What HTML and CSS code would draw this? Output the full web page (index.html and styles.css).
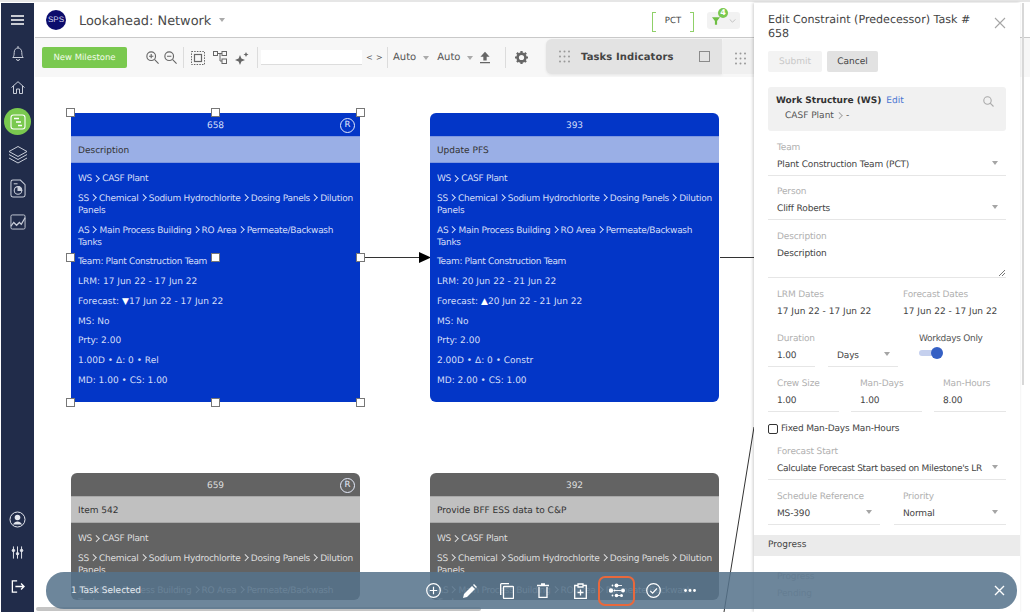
FILE: index.html
```html
<!DOCTYPE html>
<html lang="en">
<head>
    <meta charset="UTF-8">
    <meta name="viewport" content="width=device-width, initial-scale=1.0">
    <title>Lookahead: Network</title>
    <link rel="stylesheet" href="styles.css">
</head>
<body>
    <div class="app">
        <nav class="sidebar">
            <div class="side-group">
                <button class="side-btn burger"><svg width="13" height="10" viewBox="0 0 13 10"><path d="M0 1h13M0 5h13M0 9h13" stroke="#fff" stroke-width="1.500"/></svg></button>
                <button class="side-btn"><svg width="12" height="15" viewBox="0 0 12 15" fill="none" stroke="#c9ced9"><path d="M.8 11.500c1-1 1.400-2.500 1.400-5C2.200 3.800 3.800 2 6 2s3.800 1.800 3.800 4.500c0 2.500.4 4 1.400 5z"/><path d="M6 0v2M4.500 13a1.500 1.500 0 0 0 3 0"/></svg></button>
                <button class="side-btn"><svg width="14" height="13" viewBox="0 0 14 13" fill="none" stroke="#c9ced9"><path d="M.5 6.500L7 .7l6.500 5.800M2.500 5v7.500h3V8h3v4.500h3V5"/></svg></button>
                <button class="side-btn active"><svg width="16" height="16" viewBox="0 0 16 16" fill="none" stroke="#fff" stroke-width="1.100"><rect x="1" y="1" width="14" height="14" rx="2.500"/><path d="M4 4.500h5M6 8h5M8 11.500h4" stroke-width="1.400"/></svg></button>
                <button class="side-btn"><svg width="20" height="20" viewBox="0 0 20 20" fill="none" stroke="#c9ced9" stroke-width="1"><path d="M10 1.500l9 5-9 5-9-5z"/><path d="M1 9.500l9 5 9-5M1 13l9 5 9-5"/></svg></button>
                <button class="side-btn"><svg width="16" height="19" viewBox="0 0 17 20" fill="none" stroke="#c9ced9" stroke-width="1.100"><path d="M3 1h8l5 5v11a2 2 0 0 1-2 2H3a2 2 0 0 1-2-2V3a2 2 0 0 1 2-2z"/><path d="M4 5h4"/><circle cx="8.500" cy="12" r="4"/><path d="M8.500 12V8a4 4 0 0 1 4 4z" fill="#c9ced9"/></svg></button>
                <button class="side-btn"><svg width="16" height="16" viewBox="0 0 17 17" fill="none" stroke="#c9ced9" stroke-width="1"><rect x="1" y="1" width="15" height="15" rx="1.500"/><path d="M1 13l3-4 3 3 3-3 2 2 4-7" stroke-width="1.300"/></svg></button>
            </div>
            <div class="side-group">
                <button class="side-btn"><svg width="17" height="17" viewBox="0 0 17 17"><circle cx="8.500" cy="8.500" r="7.500" fill="none" stroke="#e4e7ee" stroke-width="1"/><circle cx="8.500" cy="6.500" r="2.800" fill="#e4e7ee"/><path d="M4 13.500c1-2 2.500-3 4.500-3s3.500 1 4.500 3z" fill="#e4e7ee"/></svg></button>
                <button class="side-btn"><svg width="13" height="13" viewBox="0 0 16 15" stroke="#e4e7ee" stroke-width="1.200" fill="#e4e7ee"><path d="M3 0v15M8 0v15M13 0v15"/><circle cx="3" cy="5" r="1.500"/><circle cx="8" cy="9" r="1.500"/><circle cx="13" cy="5" r="1.500"/></svg></button>
                <button class="side-btn"><svg width="14" height="13" viewBox="0 0 16 15" fill="none" stroke="#fff" stroke-width="1.500"><path d="M7 1H1.500v13H7M5 7.500h10M11.500 4l3.500 3.500-3.500 3.500"/></svg></button>
            </div>
        </nav>

        <div class="main">
            <header class="topbar">
                <div class="logo">SPS</div>
                <h1>Lookahead: Network</h1>
                <span class="caret title-caret"></span>
                <div class="team-tag">PCT</div>
                <div class="filter-btn">
                    <svg width="8" height="8" viewBox="0 0 11 10"><path d="M0 0h11L7 5v5H4V5z" fill="#6fbf44"/></svg>
                    <span class="badge">4</span>
                    <svg class="filter-chev" width="7" height="4" viewBox="0 0 8 5" fill="none" stroke="#b5b5b5"><path d="M.5.5L4 4 7.500.5"/></svg>
                </div>
            </header>

            <div class="toolbar">
                <button class="new-btn">New Milestone</button>
                <svg class="tool zoom-in" width="13" height="13" viewBox="0 0 15 15" fill="none" stroke="#666" stroke-width="1.300"><circle cx="6" cy="6" r="5"/><path d="M10 10l4.500 4.500M3.500 6h5M6 3.500v5"/></svg>
                <svg class="tool zoom-out" width="13" height="13" viewBox="0 0 15 15" fill="none" stroke="#666" stroke-width="1.300"><circle cx="6" cy="6" r="5"/><path d="M10 10l4.500 4.500M3.500 6h5"/></svg>
                <span class="sep"></span>
                <svg class="tool first" width="14" height="14" viewBox="0 0 14 14" fill="none" stroke="#666"><rect x=".5" y=".5" width="13" height="13" stroke-dasharray="1.500 1.200"/><rect x="3.500" y="3.500" width="7" height="7" stroke-width="1.200"/></svg>
                <svg class="tool" width="14" height="13" viewBox="0 0 14 13" fill="none" stroke="#666"><rect x=".5" y=".5" width="4" height="4"/><rect x="9" y=".5" width="4.500" height="4"/><rect x="9" y="8" width="4.500" height="4.500"/><path d="M4.500 2.500H9M7 2.500V10h2"/></svg>
                <svg class="tool" width="14" height="14" viewBox="0 0 14 14" fill="#666"><path d="M5 4l1.400 3.600L10 9l-3.600 1.400L5 14l-1.400-3.600L0 9l3.600-1.400zM11 1l.8 1.700 1.700.8-1.700.8L11 6l-.8-1.700-1.700-.8 1.700-.8z"/></svg>
                <span class="sep sep-search"></span>
                <input class="search" type="text">
                <span class="pager">&lt;</span>
                <span class="pager">&gt;</span>
                <span class="sep sep-auto"></span>
                <span class="auto">Auto</span><span class="caret"></span>
                <span class="auto">Auto</span><span class="caret"></span>
                <svg class="upload" width="10" height="13" viewBox="0 0 12 14" fill="#666"><path d="M6 0l5.500 6H8v4.500H4V6H.5zM0 12.500h12V14H0z"/></svg>
                <span class="sep sep-wide"></span>
                <svg class="gear" width="13" height="13" viewBox="0 0 14 14"><circle cx="7" cy="7" r="4.200" fill="none" stroke="#666" stroke-width="2.800"/><path d="M7 0v14M0 7h14M2 2l10 10M12 2L2 12" stroke="#666" stroke-width="2.400" stroke-dasharray="2.200 9.600 2.200"/></svg>
                <div class="indicators">
                    <svg width="11" height="13" viewBox="0 0 11 13" fill="#999"><circle cx="1" cy="1.500" r="1"/><circle cx="5.500" cy="1.500" r="1"/><circle cx="10" cy="1.500" r="1"/><circle cx="1" cy="6.500" r="1"/><circle cx="5.500" cy="6.500" r="1"/><circle cx="10" cy="6.500" r="1"/><circle cx="1" cy="11.500" r="1"/><circle cx="5.500" cy="11.500" r="1"/><circle cx="10" cy="11.500" r="1"/></svg>
                    <b>Tasks Indicators</b>
                    <span class="square"></span>
                </div>
                <div class="indicators-next">
                    <svg width="11" height="13" viewBox="0 0 11 13" fill="#999"><circle cx="1" cy="1.500" r="1"/><circle cx="5.500" cy="1.500" r="1"/><circle cx="10" cy="1.500" r="1"/><circle cx="1" cy="6.500" r="1"/><circle cx="5.500" cy="6.500" r="1"/><circle cx="10" cy="6.500" r="1"/><circle cx="1" cy="11.500" r="1"/><circle cx="5.500" cy="11.500" r="1"/><circle cx="10" cy="11.500" r="1"/></svg>
                </div>
            </div>

            <div class="canvas">
                <svg class="links" width="800" height="535" viewBox="0 0 800 535" fill="none" stroke="#333">
                    <path d="M325 180.500H384"/>
                    <path d="M384 175l12 5.500-12 5.500z" fill="#000" stroke="none"/>
                    <path d="M685 180.500H725"/>
                    <path d="M719 350L689 535"/>
                </svg>

                <div class="node node-658">
                    <div class="node-id">658<span class="r-mark">R</span></div>
                    <div class="node-title">Description</div>
                    <div class="node-body">
                        <p>WS <i></i> CASF Plant</p>
                        <p>SS <i></i> Chemical <i></i> Sodium Hydrochlorite <i></i> Dosing Panels <i></i> Dilution Panels</p>
                        <p>AS <i></i> Main Process Building <i></i> RO Area <i></i> Permeate/Backwash Tanks</p>
                        <p>Team: Plant Construction Team</p>
                        <p>LRM: 17 Jun 22 - 17 Jun 22</p>
                        <p>Forecast: <em>▼</em>17 Jun 22 - 17 Jun 22</p>
                        <p>MS: No</p>
                        <p>Prty: 2.00</p>
                        <p>1.00D • Δ: 0 • Rel</p>
                        <p>MD: 1.00 • CS: 1.00</p>
                    </div>
                    <span class="handle h-tl"></span><span class="handle h-tc"></span><span class="handle h-tr"></span>
                    <span class="handle h-ml"></span><span class="handle h-mc"></span><span class="handle h-mr"></span>
                    <span class="handle h-bl"></span><span class="handle h-bc"></span><span class="handle h-br"></span>
                </div>

                <div class="node node-393 round">
                    <div class="node-id">393</div>
                    <div class="node-title">Update PFS</div>
                    <div class="node-body">
                        <p>WS <i></i> CASF Plant</p>
                        <p>SS <i></i> Chemical <i></i> Sodium Hydrochlorite <i></i> Dosing Panels <i></i> Dilution Panels</p>
                        <p>AS <i></i> Main Process Building <i></i> RO Area <i></i> Permeate/Backwash Tanks</p>
                        <p>Team: Plant Construction Team</p>
                        <p>LRM: 20 Jun 22 - 21 Jun 22</p>
                        <p>Forecast: <em>▲</em>20 Jun 22 - 21 Jun 22</p>
                        <p>MS: No</p>
                        <p>Prty: 2.00</p>
                        <p>2.00D • Δ: 0 • Constr</p>
                        <p>MD: 2.00 • CS: 1.00</p>
                    </div>
                </div>

                <div class="node node-659 round grey">
                    <div class="node-id">659<span class="r-mark">R</span></div>
                    <div class="node-title">Item 542</div>
                    <div class="node-body">
                        <p>WS <i></i> CASF Plant</p>
                        <p>SS <i></i> Chemical <i></i> Sodium Hydrochlorite <i></i> Dosing Panels <i></i> Dilution Panels</p>
                        <p>AS <i></i> Main Process Building <i></i> RO Area <i></i> Permeate/Backwash Tanks</p>
                    </div>
                </div>

                <div class="node node-392 round grey">
                    <div class="node-id">392</div>
                    <div class="node-title">Provide BFF ESS data to C&amp;P</div>
                    <div class="node-body">
                        <p>WS <i></i> CASF Plant</p>
                        <p>SS <i></i> Chemical <i></i> Sodium Hydrochlorite <i></i> Dosing Panels <i></i> Dilution Panels</p>
                        <p>AS <i></i> Main Process Building <i></i> RO Area <i></i> Permeate/Backwash Tanks</p>
                    </div>
                </div>

                <div class="h-scroll"></div>
            </div>
        </div>

        <aside class="panel">
            <div class="panel-head">
                <h2>Edit Constraint (Predecessor) Task # 658</h2>
                <svg width="12" height="12" viewBox="0 0 12 12" stroke="#a5a5a5" stroke-width="1.100"><path d="M1 1l10 10M11 1L1 11"/></svg>
            </div>
            <div class="panel-btns">
                <button class="btn-submit">Submit</button>
                <button class="btn-cancel">Cancel</button>
            </div>
            <div class="ws-box">
                <div class="ws-title"><b>Work Structure (WS)</b><a>Edit</a>
                    <svg width="11" height="11" viewBox="0 0 11 11" fill="none" stroke="#aaa" stroke-width="1.100"><circle cx="4.500" cy="4.500" r="3.700"/><path d="M7.200 7.200L10.500 10.500"/></svg>
                </div>
                <div class="ws-path">CASF Plant <i></i> -</div>
            </div>

            <div class="field select"><label>Team</label><div class="value">Plant Construction Team (PCT)</div></div>
            <div class="field select"><label>Person</label><div class="value">Cliff Roberts</div></div>
            <div class="field desc"><label>Description</label><div class="value">Description<svg class="grip" width="6" height="6" viewBox="0 0 6 6" stroke="#777"><path d="M0 6l6-6M3 6l3-3"/></svg></div></div>

            <div class="row two dates">
                <div class="field plain"><label>LRM Dates</label><div class="value">17 Jun 22 - 17 Jun 22</div></div>
                <div class="field plain"><label>Forecast Dates</label><div class="value">17 Jun 22 - 17 Jun 22</div></div>
            </div>
            <div class="row duration">
                <div class="field"><label>Duration</label><div class="value">1.00</div></div>
                <div class="field select"><label>&nbsp;</label><div class="value">Days</div></div>
                <div class="workdays">
                    <span>Workdays Only</span>
                    <div class="toggle"><span class="knob"></span></div>
                </div>
            </div>
            <div class="row three">
                <div class="field"><label>Crew Size</label><div class="value">1.00</div></div>
                <div class="field"><label>Man-Days</label><div class="value">1.00</div></div>
                <div class="field"><label>Man-Hours</label><div class="value">8.00</div></div>
            </div>
            <div class="check-row"><span class="check"></span>Fixed Man-Days Man-Hours</div>
            <div class="field select"><label>Forecast Start</label><div class="value squeeze">Calculate Forecast Start based on Milestone's LR</div></div>
            <div class="row two">
                <div class="field select"><label>Schedule Reference</label><div class="value">MS-390</div></div>
                <div class="field select"><label>Priority</label><div class="value">Normal</div></div>
            </div>
            <div class="section-band">Progress</div>
            <div class="field plain faint"><label>Progress</label><div class="value">Pending</div></div>
        </aside>
        <div class="panel-scroll"></div>

        <div class="action-bar">
            <span class="selected-count">1 Task Selected</span>
            <div class="actions">
                <button class="act"><svg width="15" height="15" viewBox="0 0 15 15" fill="none" stroke="#fff" stroke-width="1.200"><circle cx="7.500" cy="7.500" r="6.800"/><path d="M3.800 7.500h7.400M7.500 3.800v7.400"/></svg></button>
                <button class="act"><svg width="14" height="14" viewBox="0 0 14 14" fill="#fff"><path d="M0 14l1-4 8-8 3 3-8 8zM10 1l1-1 3 3-1 1z"/></svg></button>
                <button class="act"><svg width="14" height="16" viewBox="0 0 14 16" fill="none" stroke="#fff" stroke-width="1.300"><rect x="3.500" y="3.500" width="10" height="12" rx=".8"/><path d="M.7 12V1.500a.8.8 0 0 1 .8-.8H9"/></svg></button>
                <button class="act"><svg width="12" height="15" viewBox="0 0 12 15" fill="none" stroke="#fff" stroke-width="1.300"><path d="M2 4v10.300h8V4"/><path d="M0 2.500h12M4 1h4" stroke-width="1.600"/></svg></button>
                <button class="act"><svg width="13" height="16" viewBox="0 0 13 16" fill="none" stroke="#fff" stroke-width="1.300"><path d="M4 2.500H.7v12.800h11.600V2.500H9"/><path d="M4 1h5v3H4zM3.500 9.500h6M6.500 6.500v6"/></svg></button>
                <button class="act act-on"><svg width="16" height="15" viewBox="0 0 16 15" fill="#fff"><path d="M9 2.500h4M6 7.500h6M9 12.500h2" fill="none" stroke="#fff" stroke-width=".9"/><circle cx="3.500" cy="2.500" r=".9"/><circle cx="7.500" cy="2.500" r="2"/><circle cx="2" cy="7.500" r="2.200"/><circle cx="5.500" cy="7.500" r="1"/><circle cx="14" cy="7.500" r="2"/><circle cx="3.500" cy="12.500" r=".9"/><circle cx="7.500" cy="12.500" r="1.800"/><circle cx="12.500" cy="12.500" r="1.500"/></svg></button>
                <button class="act"><svg width="15" height="15" viewBox="0 0 15 15" fill="none" stroke="#fff" stroke-width="1.200"><circle cx="7.500" cy="7.500" r="6.800"/><path d="M4.300 7.800l2.300 2.300 4.300-4.600"/></svg></button>
                <button class="act"><svg width="12" height="3" viewBox="0 0 12 3" fill="#fff"><circle cx="1.500" cy="1.500" r="1.400"/><circle cx="6" cy="1.500" r="1.400"/><circle cx="10.500" cy="1.500" r="1.400"/></svg></button>
            </div>
            <svg class="bar-close" width="11" height="11" viewBox="0 0 11 11" stroke="#fff" stroke-width="1.400"><path d="M1 1l9 9M10 1l-9 9"/></svg>
        </div>
    </div>
</body>
</html>
```

FILE: styles.css
```css
*{
    margin: 0;
    padding: 0;
    box-sizing: border-box;
}
html,body{
    height: 100%;
    overflow: hidden;
}
body{
    background-color: #fff;
    font-family: "DejaVu Sans", Verdana, sans-serif;
    color: #444;
    text-rendering: geometricPrecision;
}
button{
    font-family: inherit;
    border: none;
    background: none;
    text-rendering: inherit;
}
.app{
    position: relative;
    display: flex;
    width: 1030px;
    height: 612px;
    padding: 3px 0 0 1px;
    background: linear-gradient(#e6e6e6 2px, #fff 2px);
}

/* left nav */
.sidebar{
    width: 33px;
    margin-right: 1px;
    flex: none;
    background-color: #212c4a;
    display: flex;
    flex-direction: column;
    justify-content: space-between;
    align-items: center;
    padding-bottom: 9px;
}
.side-group{
    display: flex;
    flex-direction: column;
    align-items: center;
}
.side-btn{
    width: 28px;
    height: 33.500px;
    display: flex;
    justify-content: center;
    align-items: center;
}
.burger{
    height: 34px;
}
.active{
    height: 27px;
    width: 27px;
    margin: 4px 0 3px;
    border-radius: 50%;
    background-color: #7ac94f;
}

/* top */
.main{
    flex: 1;
    min-width: 0;
    display: flex;
    flex-direction: column;
}
.topbar{
    height: 35px;
    flex: none;
    display: flex;
    align-items: center;
    padding-left: 11px;
    border-bottom: 1px solid #c9c9c9;
    position: relative;
}
.logo{
    width: 20px;
    height: 20px;
    border-radius: 50%;
    background-color: #0c0c6c;
    color: #d8d9f0;
    font-family: "Liberation Sans", sans-serif;
    font-size: 8px;
    line-height: 20px;
    text-align: center;
}
h1{
    font-size: 12.900px;
    font-weight: 400;
    color: #4a4a4a;
    margin: 2px 0 0 13px;
}
.caret{
    display: inline-block;
    width: 0;
    height: 0;
    border-left: 3.500px solid transparent;
    border-right: 3.500px solid transparent;
    border-top: 4px solid #aaa;
}
.title-caret{
    margin-left: 8px;
}
.team-tag{
    position: absolute;
    left: 617px;
    top: 9px;
    width: 42px;
    height: 18px;
    font-size: 8.500px;
    line-height: 18px;
    text-align: center;
    color: #444;
}
.team-tag::before,.team-tag::after{
    content: "";
    position: absolute;
    top: 0;
    width: 3px;
    height: 18px;
    border: 1px solid #8fd068;
}
.team-tag::before{
    left: 0;
    border-right: none;
}
.team-tag::after{
    right: 0;
    border-left: none;
}
.filter-btn{
    position: absolute;
    left: 672px;
    top: 9px;
    width: 33px;
    height: 17px;
    background-color: #f2f2f2;
    border-radius: 3px;
    display: flex;
    align-items: center;
    padding-left: 5px;
}
.badge{
    position: absolute;
    left: 11px;
    top: -4px;
    width: 10px;
    height: 10px;
    border-radius: 50%;
    background-color: #7ac94f;
    color: #fff;
    font-size: 8px;
    font-weight: 700;
    line-height: 10px;
    text-align: center;
}
.filter-chev{
    margin-left: 9px;
}

.toolbar{
    height: 39px;
    flex: none;
    background-color: #f7f7f7;
    display: flex;
    align-items: center;
    padding-left: 7px;
    position: relative;
}
.new-btn{
    width: 85px;
    height: 21px;
    background-color: #7ac94f;
    border-radius: 2px;
    color: #f2fbe9;
    font-size: 8.500px;
}
.tool{
    flex: none;
    margin-left: 8px;
}
.zoom-in{
    margin-left: 19px;
}
.zoom-out{
    margin-left: 5px;
}
.tool.first{
    margin-left: 0;
}
.sep{
    width: 1px;
    height: 21px;
    background-color: #dcdcdc;
    margin: 0 7px 0 6px;
}
.sep-search{
    margin: 0 3px 0 8px;
}
.sep-auto{
    margin: 0 5px 0 5px;
}
.sep-wide{
    margin: 0 9px 0 15px;
}
.search{
    width: 101px;
    height: 15px;
    border: none;
    border-bottom: 1px solid #ddd;
    background-color: #fff;
}
.pager{
    font-size: 8px;
    color: #555;
    margin-left: 4px;
    width: 6px;
}
.auto{
    font-size: 10px;
    color: #555;
    margin-right: 7px;
}
.auto + .caret{
    margin-right: 8px;
}
.upload{
    flex: none;
    margin-left: -1px;
}
.gear{
    flex: none;
}
.indicators{
    position: absolute;
    left: 511px;
    top: 1px;
    width: 176px;
    height: 35px;
    background-color: #e3e3e3;
    border-radius: 6px 0 0 6px;
    display: flex;
    align-items: center;
    padding-left: 13px;
    box-shadow: 0 1px 3px rgba(0,0,0,.08);
}
.indicators b{
    font-size: 10px;
    color: #444;
    margin: 1px 0 0 11px;
    white-space: nowrap;
    letter-spacing: .1px;
}
.square{
    width: 11px;
    height: 11px;
    border: 1px solid #8a8a8a;
    margin-left: 25px;
    flex: none;
}
.indicators-next{
    position: absolute;
    left: 688px;
    top: 1px;
    width: 40px;
    height: 35px;
    background-color: #f0f0f0;
    padding: 11px 0 0 12px;
}

/* network canvas */
.canvas{
    flex: 1;
    position: relative;
    overflow: hidden;
}
.links{
    position: absolute;
    left: 0;
    top: 0;
}
.node{
    position: absolute;
    width: 289px;
    background-color: #0336c7;
    color: #d5def8;
    font-size: 9px;
    line-height: 12px;
}
.node-658{ left: 36px; top: 36px; height: 289px; }
.node-393{ left: 395px; top: 36px; height: 289px; }
.node-659{ left: 36px; top: 396px; height: 127px; }
.node-392{ left: 395px; top: 396px; height: 127px; }
.round{
    border-radius: 6px;
    overflow: hidden;
}
.node-id{
    height: 23px;
    line-height: 26px;
    text-align: center;
    position: relative;
}
.node-title{
    height: 27px;
    line-height: 29px;
    padding-left: 7px;
    color: #333;
    background-color: #9aafe6;
    border-top: 1px solid #7f98df;
    border-bottom: 1px solid #7f98df;
}
.node-body{
    padding: 10px 7px 0;
}
.node-body p{
    margin-bottom: 7.750px;
}
/* path lines run a bit tighter than the date lines */
.node-body p:nth-child(-n+3){
    letter-spacing: -.28px;
}
.node-body p:nth-child(4){
    letter-spacing: -.35px;
}
.node-body i,.ws-path i{
    display: inline-block;
    width: 4.500px;
    height: 4.500px;
    margin: 0 1px 1px -.5px;
    border-top: 1.300px solid currentColor;
    border-right: 1.300px solid currentColor;
    transform: rotate(45deg);
}
.node-body em{
    font-style: normal;
    color: #fff;
}
.r-mark{
    position: absolute;
    right: 5px;
    top: 5px;
    width: 15px;
    height: 15px;
    border: 1px solid #e6ebfb;
    border-radius: 50%;
    line-height: 13px;
    font-size: 8.500px;
    color: #e6ebfb;
}
.grey{
    background-color: #636363;
    color: #dedede;
}
.grey .node-title{
    background-color: #c0c0c0;
    border-color: #a8a8a8;
}
.handle{
    position: absolute;
    width: 9px;
    height: 9px;
    background-color: #fff;
    border: 1px solid #777;
}
.h-tl,.h-tc,.h-tr{ top: -5px; }
.h-ml,.h-mc,.h-mr{ top: 140px; }
.h-bl,.h-bc,.h-br{ bottom: -5px; }
.h-tl,.h-ml,.h-bl{ left: -5px; }
.h-tc,.h-mc,.h-bc{ left: 140px; }
.h-tr,.h-mr,.h-br{ right: -5px; }
.h-scroll{
    position: absolute;
    left: 1px;
    bottom: 1px;
    width: 445px;
    height: 4px;
    border-radius: 2px;
    background-color: #c4c4c4;
}

/* edit panel */
.panel{
    position: absolute;
    left: 754px;
    top: 3px;
    width: 266px;
    height: 609px;
    overflow: hidden;
    padding: 0 14px;
    background-color: #fff;
    box-shadow: -1px 0 3px rgba(0,0,0,.2);
}
.panel-scroll{
    position: absolute;
    left: 1022px;
    top: 3px;
    width: 2px;
    height: 382px;
    background-color: #d8d8d8;
}
.panel-head{
    display: flex;
    justify-content: space-between;
    padding-top: 10px;
}
h2{
    width: 215px;
    font-size: 11.100px;
    font-weight: 400;
    line-height: 14px;
    color: #444;
}
.panel-head svg{
    flex: none;
    margin: 4px 0 0;
}
.panel-btns{
    display: flex;
    gap: 5px;
    margin-top: 10px;
}
.panel-btns button{
    height: 21px;
    font-size: 9px;
    border-radius: 2px;
}
.btn-submit{
    width: 54px;
    background-color: #f3f3f3;
    color: #c8c8c8;
}
.btn-cancel{
    width: 51px;
    background-color: #e2e2e2;
    color: #444;
}
.ws-box{
    height: 44px;
    margin: 15px 0 3.300px;
    padding: 8px 8px;
    background-color: #f1f1f1;
    border-radius: 3px;
}
.ws-title{
    display: flex;
    align-items: center;
    font-size: 9px;
    line-height: 12px;
}
.ws-title b{
    color: #333;
}
.ws-title a{
    color: #4a75d1;
    margin-left: 5px;
}
.ws-title svg{
    margin-left: auto;
    margin-right: 4px;
}
.ws-path{
    padding-left: 9px;
    margin-top: 3px;
    font-size: 9px;
    line-height: 12px;
    color: #555;
}
.ws-path i{
    color: #aaa;
    margin: 0 2px 1px 0;
}
.field{
    margin-top: 10.700px;
    position: relative;
    min-width: 0;
}
.field label{
    display: block;
    padding-left: 9px;
    font-size: 9px;
    line-height: 12px;
    color: #b0b0b0;
    letter-spacing: -.15px;
}
.field .value{
    height: 22px;
    padding: 5px 9px 0;
    font-size: 9px;
    line-height: 13px;
    color: #444;
    border-bottom: 1px solid #e6e6e6;
    white-space: nowrap;
    position: relative;
    letter-spacing: -.15px;
}
.field .squeeze{
    letter-spacing: -.3px;
}
.dates .field .value{
    letter-spacing: 0;
}
.field.desc .value{
    height: 35px;
}
.grip{
    position: absolute;
    right: 1px;
    bottom: 1px;
}
.select::after{
    content: "";
    position: absolute;
    right: 8px;
    top: 19px;
    border-left: 3.500px solid transparent;
    border-right: 3.500px solid transparent;
    border-top: 4px solid #a5a5a5;
}
.row{
    display: grid;
    gap: 14px;
}
.two{
    grid-template-columns: 112px 112px;
}
.three{
    grid-template-columns: 71px 71px 72px;
    gap: 12px;
}
.duration{
    grid-template-columns: 47px 70px 90px;
    gap: 13px;
}
.plain .value{
    border-bottom: none;
}
.workdays{
    margin-top: 10.700px;
    font-size: 9px;
    line-height: 12px;
    color: #555;
    white-space: nowrap;
    padding-left: 8px;
    letter-spacing: -.3px;
}
.toggle{
    position: relative;
    width: 20px;
    height: 6px;
    margin-top: 5px;
    border-radius: 3px;
    background-color: #c5d0ee;
}
.knob{
    position: absolute;
    right: -4px;
    top: -3px;
    width: 12px;
    height: 12px;
    border-radius: 50%;
    background-color: #3560c4;
}
.check-row{
    display: flex;
    align-items: center;
    margin: 11px 0 1.300px;
    font-size: 9px;
    line-height: 12px;
    color: #444;
    letter-spacing: -.17px;
}
.check{
    width: 10px;
    height: 10px;
    margin-right: 3px;
    border: 1px solid #333;
    border-radius: 2px;
}
.section-band{
    margin: 10.500px -14px 0;
    height: 21px;
    padding-left: 14px;
    background-color: #ebebeb;
    font-size: 9px;
    line-height: 21px;
    color: #444;
}
.faint{
    margin-top: 15px;
}
.faint label,.faint .value{
    color: #c0c0c0;
}

/* bottom selection bar */
.action-bar{
    position: absolute;
    left: 46px;
    top: 572px;
    width: 971px;
    height: 37px;
    border-radius: 18px;
    background-color: rgba(85,114,138,.86);
    display: flex;
    align-items: center;
    padding-left: 25px;
    color: #fff;
}
.selected-count{
    font-size: 9px;
    color: #e6ebf0;
    margin-top: 1px;
}
.actions{
    position: absolute;
    left: 369px;
    top: 0;
    display: flex;
    height: 37px;
    align-items: center;
}
.act{
    width: 36.700px;
    height: 30px;
    display: flex;
    justify-content: center;
    align-items: center;
}
.act-on{
    border: 2px solid #e8683c;
    border-radius: 7px;
}
.bar-close{
    position: absolute;
    right: 12px;
    top: 13px;
}
```
